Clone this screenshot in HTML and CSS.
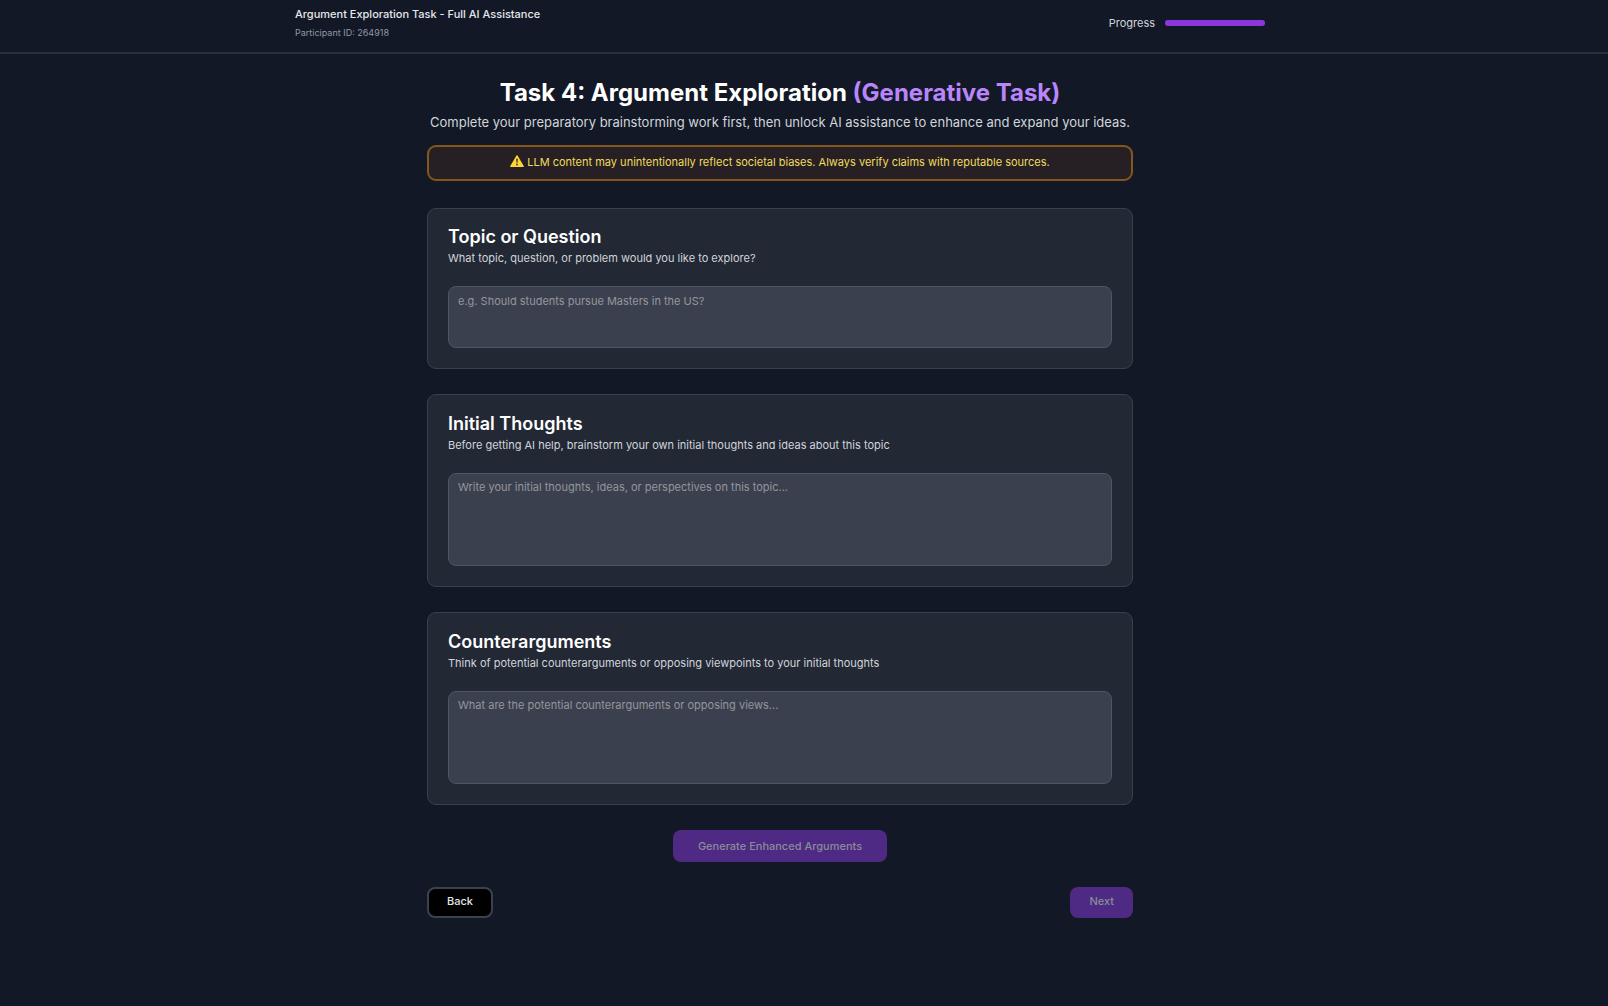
FILE: index.html
```html
<!DOCTYPE html>
<html lang="en">
<head>
<meta charset="utf-8">
<meta name="viewport" content="width=device-width, initial-scale=1">
<title>Argument Exploration Task</title>
<link rel="stylesheet" href="styles.css">
</head>
<body>
<header class="topbar">
  <div class="topbar-inner">
    <div>
      <p class="study-name">Argument Exploration Task - Full AI Assistance</p>
      <p class="participant">Participant ID: 264918</p>
    </div>
    <div class="progress">
      <span id="progress-label">Progress</span>
      <div class="progress-track" role="progressbar" aria-labelledby="progress-label" aria-valuenow="100" aria-valuemin="0" aria-valuemax="100">
        <div class="progress-fill" style="width: 100%"></div>
      </div>
    </div>
  </div>
</header>
<main class="page">
  <h1 class="title">Task 4: Argument Exploration <span class="title-accent">(Generative Task)</span></h1>
  <p class="subtitle">Complete your preparatory brainstorming work first, then unlock AI assistance to enhance and expand your ideas.</p>
  <p class="notice">
    <svg class="notice-icon" viewBox="0 0 14 12" aria-hidden="true">
      <path d="M7 .8 13.2 11.4H.8Z" fill="#fdd835" stroke="#fdd835" stroke-width="1.2" stroke-linejoin="round"/>
      <path d="M6.1 3.8h1.8l-.4 4h-1z" fill="#3b2f2f"/>
      <circle cx="7" cy="9.5" r=".9" fill="#3b2f2f"/>
    </svg>
    <span>LLM content may unintentionally reflect societal biases. Always verify claims with reputable sources.</span>
  </p>
  <form class="form">
    <section class="card card-short">
      <h2 class="card-title"><label for="topic">Topic or Question</label></h2>
      <p class="card-text">What topic, question, or problem would you like to explore?</p>
      <textarea class="field" id="topic" placeholder="e.g. Should students pursue Masters in the US?"></textarea>
    </section>
    <section class="card">
      <h2 class="card-title"><label for="thoughts">Initial Thoughts</label></h2>
      <p class="card-text">Before getting AI help, brainstorm your own initial thoughts and ideas about this topic</p>
      <textarea class="field" id="thoughts" placeholder="Write your initial thoughts, ideas, or perspectives on this topic..."></textarea>
    </section>
    <section class="card">
      <h2 class="card-title"><label for="counter">Counterarguments</label></h2>
      <p class="card-text">Think of potential counterarguments or opposing viewpoints to your initial thoughts</p>
      <textarea class="field" id="counter" placeholder="What are the potential counterarguments or opposing views..."></textarea>
    </section>
    <button class="btn btn-primary btn-generate" type="button" disabled>Generate Enhanced Arguments</button>
    <div class="nav">
      <button class="btn btn-back" type="button">Back</button>
      <button class="btn btn-primary" type="button" disabled>Next</button>
    </div>
  </form>
</main>
</body>
</html>
```
FILE: styles.css
```css
* {
  box-sizing: border-box;
}

body {
  margin: 0;
  padding-right: 48px;
  min-height: 100vh;
  background: linear-gradient(#2a303d, #2a303d) 0 52px / 100% 2px no-repeat #121825;
  color: #d1d5db;
  font-family: Inter, "Liberation Sans", sans-serif;
  font-size: 11px;
  line-height: 16px;
}

h1,
h2,
p {
  margin: 0;
}

.topbar {
  height: 54px;
}

.topbar-inner {
  display: flex;
  justify-content: space-between;
  max-width: 970px;
  margin: 0 auto;
  padding-top: 6px;
}

.study-name {
  color: #e5e7eb;
  font-weight: 500;
}

.participant {
  margin-top: 3px;
  color: #9098a6;
  font-size: 9px;
}

.progress {
  display: flex;
  align-items: center;
  align-self: flex-start;
  gap: 10px;
  padding-top: 9px;
}

.progress-track {
  width: 100px;
  height: 6px;
  border-radius: 3px;
  background: #374151;
}

.progress-fill {
  height: 100%;
  border-radius: 3px;
  background: #8b35dc;
}

.page {
  max-width: 706px;
  margin: 0 auto;
  padding: 23px 0 40px;
}

.title {
  color: #fff;
  font-size: 24px;
  font-weight: 700;
  line-height: 32px;
  text-align: center;
}

.title-accent {
  color: #b886fa;
}

.subtitle {
  margin-top: 3px;
  font-size: 13px;
  line-height: 20px;
  text-align: center;
}

.notice {
  display: flex;
  justify-content: center;
  gap: 3px;
  margin-top: 13px;
  padding: 7px 16px 9px;
  border: 2px solid #85571c;
  border-radius: 9px;
  background: #262024;
  color: #f0dc5c;
}

.notice-icon {
  width: 14px;
  height: 12px;
  margin-top: 1px;
}

.form {
  display: flex;
  flex-direction: column;
  gap: 25px;
  margin-top: 27px;
}

.card {
  padding: 17px 20px 20px;
  border: 1px solid #3a414e;
  border-radius: 9px;
  background: #222834;
}

.card-title {
  color: #fff;
  font-size: 18px;
  font-weight: 600;
  line-height: 24px;
}

.card-text {
  margin-top: 1px;
}

.field {
  display: block;
  width: 100%;
  height: 93px;
  margin-top: 20px;
  padding: 5px 9px;
  border: 1px solid #4e5563;
  border-radius: 8px;
  background: #3b404f;
  color: #fff;
  font: inherit;
  resize: none;
}

.card-short {
  padding-top: 16px;
}

.card-short .field {
  height: 62px;
  padding-top: 6px;
}

.field::placeholder {
  color: #94969b;
}

.btn {
  padding: 6px 19px 9px;
  border: 0;
  border-radius: 8px;
  font: inherit;
  font-weight: 500;
}

.btn-primary {
  background: #4e2a84;
  color: #898c98;
}

.btn-generate {
  align-self: center;
  padding: 8px 25px;
}

.nav {
  display: flex;
  justify-content: space-between;
}

.btn-back {
  padding: 4px 18px 7px;
  border: 2px solid #3a424f;
  background: #000;
  color: #e5e7eb;
}
```
